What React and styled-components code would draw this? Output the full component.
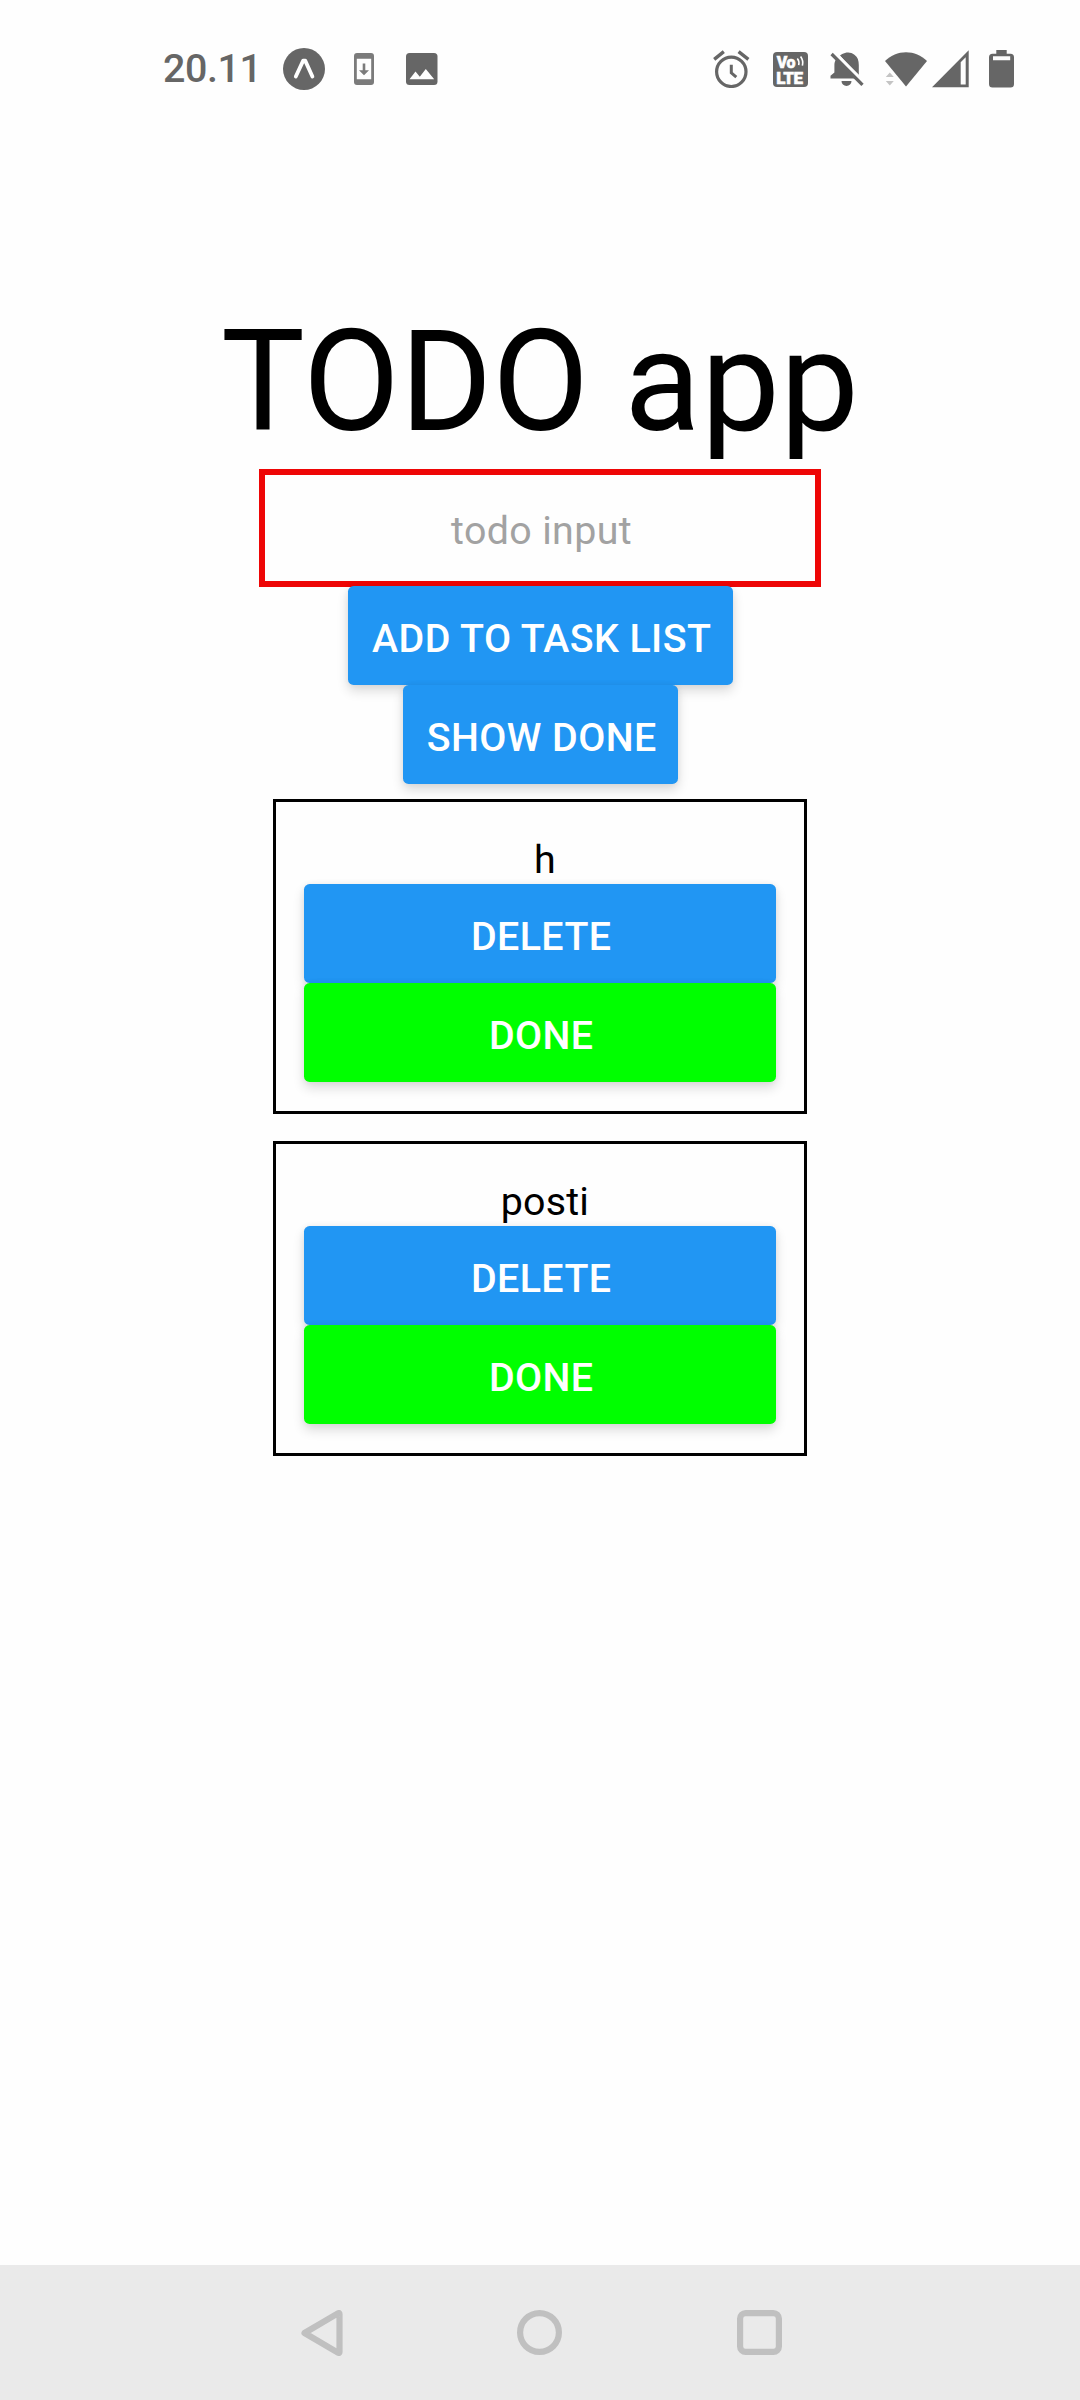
import React from "react";
import styled, { createGlobalStyle } from "styled-components";

const GlobalStyle = createGlobalStyle`
  * { box-sizing: border-box; }
  body { margin: 0; background: #fefefe; }
`;

const Screen = styled.div`
  display: flex;
  flex-direction: column;
  width: 1080px;
  height: 2400px;
  background: #fefefe;
  font-family: Roboto, "Liberation Sans", sans-serif;
  color: #000;
`;

const StatusBar = styled.header`
  display: flex;
  justify-content: space-between;
  align-items: center;
  height: 138px;
  padding: 0 66px 0 163px;
  color: #666;
`;

const StatusGroup = styled.div`
  display: flex;
  align-items: center;
`;

const Clock = styled.span`
  width: 120px;
  font-size: 39.4px;
  font-weight: 500;
  line-height: 46px;
  letter-spacing: -0.4px;
`;

const Glyph = styled.svg`
  display: block;
  flex: none;
  width: ${(p) => p.$w}px;
  height: ${(p) => p.$h}px;
  margin-left: ${(p) => p.$gap || 0}px;
`;

const Content = styled.main`
  flex: 1;
  display: flex;
  flex-direction: column;
  align-items: center;
  padding-top: 157px;
`;

const Title = styled.h1`
  margin: 0;
  font-size: 140.625px;
  font-weight: 400;
  line-height: 174px;
  letter-spacing: 0.15px;
  white-space: nowrap;
`;

const TodoInput = styled.input`
  width: 562px;
  height: 118px;
  padding: 4px 0 0 3px;
  border: 6px solid #ee0606;
  border-radius: 0;
  outline: none;
  background: transparent;
  font: 400 39.375px Roboto, "Liberation Sans", sans-serif;
  letter-spacing: 0.35px;
  text-align: center;
  &::placeholder { color: #a2a2a2; opacity: 1; }
`;

const Button = styled.button`
  display: block;
  height: 99px;
  padding: 6px 21.6px 0 24px;
  border: 0;
  border-radius: 5.6px;
  background: ${(p) => (p.$done ? "#00ff00" : "#2196f3")};
  color: #fff;
  font: 500 39.375px/46px Roboto, "Liberation Sans", sans-serif;
  letter-spacing: 0.4px;
  text-transform: uppercase;
  white-space: nowrap;
  box-shadow: 0 6px 12px rgba(0, 0, 0, 0.14), 0 0 6px rgba(0, 0, 0, 0.06);
`;

const Actions = styled.div`
  display: flex;
  flex-direction: column;
  align-items: center;
  margin: -1px 0 0 1px;
`;

const TaskList = styled.div`
  display: flex;
  flex-direction: column;
  gap: 27px;
  margin-top: 15px;
`;

const TaskCard = styled.section`
  display: flex;
  flex-direction: column;
  width: 534px;
  height: 315px;
  padding: 33px 28px 0;
  border: 3px solid #000;
`;

const TaskName = styled.div`
  font-size: 39.375px;
  line-height: 49px;
  letter-spacing: 0.2px;
  text-align: center;
  white-space: pre;
`;

const NavBar = styled.nav`
  display: flex;
  justify-content: center;
  align-items: center;
  height: 135px;
  padding-left: 3px;
  background: #eaeaea;
`;

function ExpoIcon() {
  return (
    <Glyph $w={42} $h={42} viewBox="0 0 42 42">
      <circle cx="21" cy="21" r="21" fill="#666" />
      <path d="M12.8 28.5 20.2 12.6h2L29.4 28.5" fill="none" stroke="#fff" strokeWidth="3.8" strokeLinejoin="round" strokeLinecap="round" />
    </Glyph>
  );
}

function UpdateIcon() {
  return (
    <Glyph $w={20} $h={32} $gap={28.5} viewBox="0 0 20 32">
      <path fill="#7b7b7b" fillRule="evenodd" d="M3 0h14a3 3 0 0 1 3 3v26a3 3 0 0 1-3 3H3a3 3 0 0 1-3-3V3a3 3 0 0 1 3-3zM2.8 5.8v20.4h14.4V5.8z" />
      <path fill="#7b7b7b" d="M8.7 10.5h2.6v6.8H15l-5 5-5-5h3.7z" />
    </Glyph>
  );
}

function PictureIcon() {
  return (
    <Glyph $w={32} $h={32} $gap={32.5} viewBox="0 0 32 32">
      <rect width="31.5" height="32" rx="3.5" fill="#666" />
      <path fill="#fff" d="M3.5 26.3 9.5 18.5l4.3 5.2 6-7.8 8.4 10.4z" />
    </Glyph>
  );
}

function AlarmIcon() {
  return (
    <Glyph $w={37} $h={38} viewBox="0 0 37 38" fill="none" stroke="#666">
      <circle cx="18.3" cy="21.8" r="14.7" strokeWidth="3.2" />
      <path d="M1.2 9.3 10.8 1.6M25.6 1.6l9.8 7.7" strokeWidth="3.4" />
      <path d="M18.3 14.8v8l5 4.3" strokeWidth="3" />
    </Glyph>
  );
}

const LogoText = styled.text`
  font-family: Roboto, sans-serif;
  font-weight: 900;
  fill: #fff;
  stroke: #fff;
  stroke-width: 0.5px;
`;

function VolteIcon() {
  return (
    <Glyph $w={35} $h={35} $gap={23.5} viewBox="0 0 35 35">
      <rect width="35" height="35" rx="4" fill="#666" />
      <LogoText fontSize="16">
        <tspan x="3.8" y="15.8" letterSpacing="-0.5">Vo</tspan>
        <tspan x="3.2" y="31.6" fontSize="17" letterSpacing="-0.4">LTE</tspan>
      </LogoText>
      <path d="M24.3 6.5q2.3 2.6 1.4 6.6M27.6 4.5q3 4 1.8 9.1" fill="none" stroke="#fff" strokeWidth="1.6" />
    </Glyph>
  );
}

function MutedIcon() {
  return (
    <Glyph $w={35} $h={35} $gap={22} viewBox="0 0 35 35">
      <path fill="#666" d="M.5 26.6v-2.8l3.9-3.4V13c0-2 .6-3.9 1.6-5.5L25.2 26.6zM10 3.6C11.3 2.4 13 1.5 15 1c3.4-1 6.5-.4 9.4 1.7 3.4 2.4 4.4 5.8 4.4 10.3v11.5zM11.5 29h10a5 5 0 0 1-10 0z" />
      <path d="M4 0 34.5 30.4" stroke="#fefefe" strokeWidth="3" />
      <path d="M1.6 2 32.5 32.8" stroke="#666" strokeWidth="3.3" />
    </Glyph>
  );
}

function WifiIcon() {
  return (
    <Glyph $w={42} $h={35} $gap={19.5} viewBox="0 0 42 35">
      <path fill="#666" d="M0 9C6 3.3 13 .2 21 .2S36 3.3 42 9L21 34.5z" />
      <path fill="#c4c4c4" d="M.8 25 4.8 20.5 8.8 25zM.8 29h8l-4 4.5z" />
    </Glyph>
  );
}

function SignalIcon() {
  return (
    <Glyph $w={37} $h={38} $gap={5} viewBox="0 0 37 38">
      <path fill="#666" fillRule="evenodd" d="M36.7.3V37.2H0zM33.7 7.2 28.7 12.2V34.5H33.7z" />
    </Glyph>
  );
}

function BatteryIcon() {
  return (
    <Glyph $w={25} $h={38} $gap={20.5} viewBox="0 0 25 38">
      <path fill="#666" fillRule="evenodd" d="M7.3 0H17.7V3.8h3.8A3.5 3.5 0 0 1 25 7.3V34a3.5 3.5 0 0 1-3.5 3.5h-18A3.5 3.5 0 0 1 0 34V7.3a3.5 3.5 0 0 1 3.5-3.5h3.8zM4 6.3v3.9h17.2V6.3z" />
    </Glyph>
  );
}

function BackIcon() {
  return (
    <Glyph $w={42} $h={46} viewBox="0 0 42 46">
      <path d="M3.5 23 37.3 3.2Q38.5 2.6 38.5 4V42Q38.5 43.4 37.3 42.8Z" fill="none" stroke="#c0c0c0" strokeWidth="6.2" strokeLinejoin="round" />
    </Glyph>
  );
}

function HomeIcon() {
  return (
    <Glyph $w={45} $h={45} $gap={174.5} viewBox="0 0 45 45">
      <circle cx="22.5" cy="22.5" r="19.4" fill="none" stroke="#c0c0c0" strokeWidth="6.2" />
    </Glyph>
  );
}

function RecentsIcon() {
  return (
    <Glyph $w={45} $h={45} $gap={175} viewBox="0 0 45 45">
      <rect x="3.1" y="3.1" width="38.8" height="38.8" rx="5.5" fill="none" stroke="#c0c0c0" strokeWidth="6.2" />
    </Glyph>
  );
}

const tasks = ["h", "posti"];

export default function App() {
  return (
    <Screen>
      <GlobalStyle />
      <StatusBar>
        <StatusGroup>
          <Clock>20.11</Clock>
          <ExpoIcon />
          <UpdateIcon />
          <PictureIcon />
        </StatusGroup>
        <StatusGroup>
          <AlarmIcon />
          <VolteIcon />
          <MutedIcon />
          <WifiIcon />
          <SignalIcon />
          <BatteryIcon />
        </StatusGroup>
      </StatusBar>
      <Content>
        <Title>TODO app</Title>
        <TodoInput placeholder="todo input" />
        <Actions>
          <Button>Add to task list</Button>
          <Button>Show done</Button>
        </Actions>
        <TaskList>
          {tasks.map((task) => (
            <TaskCard key={task}>
              <TaskName>{" " + task}</TaskName>
              <Button>Delete</Button>
              <Button $done>Done</Button>
            </TaskCard>
          ))}
        </TaskList>
      </Content>
      <NavBar>
        <BackIcon />
        <HomeIcon />
        <RecentsIcon />
      </NavBar>
    </Screen>
  );
}
